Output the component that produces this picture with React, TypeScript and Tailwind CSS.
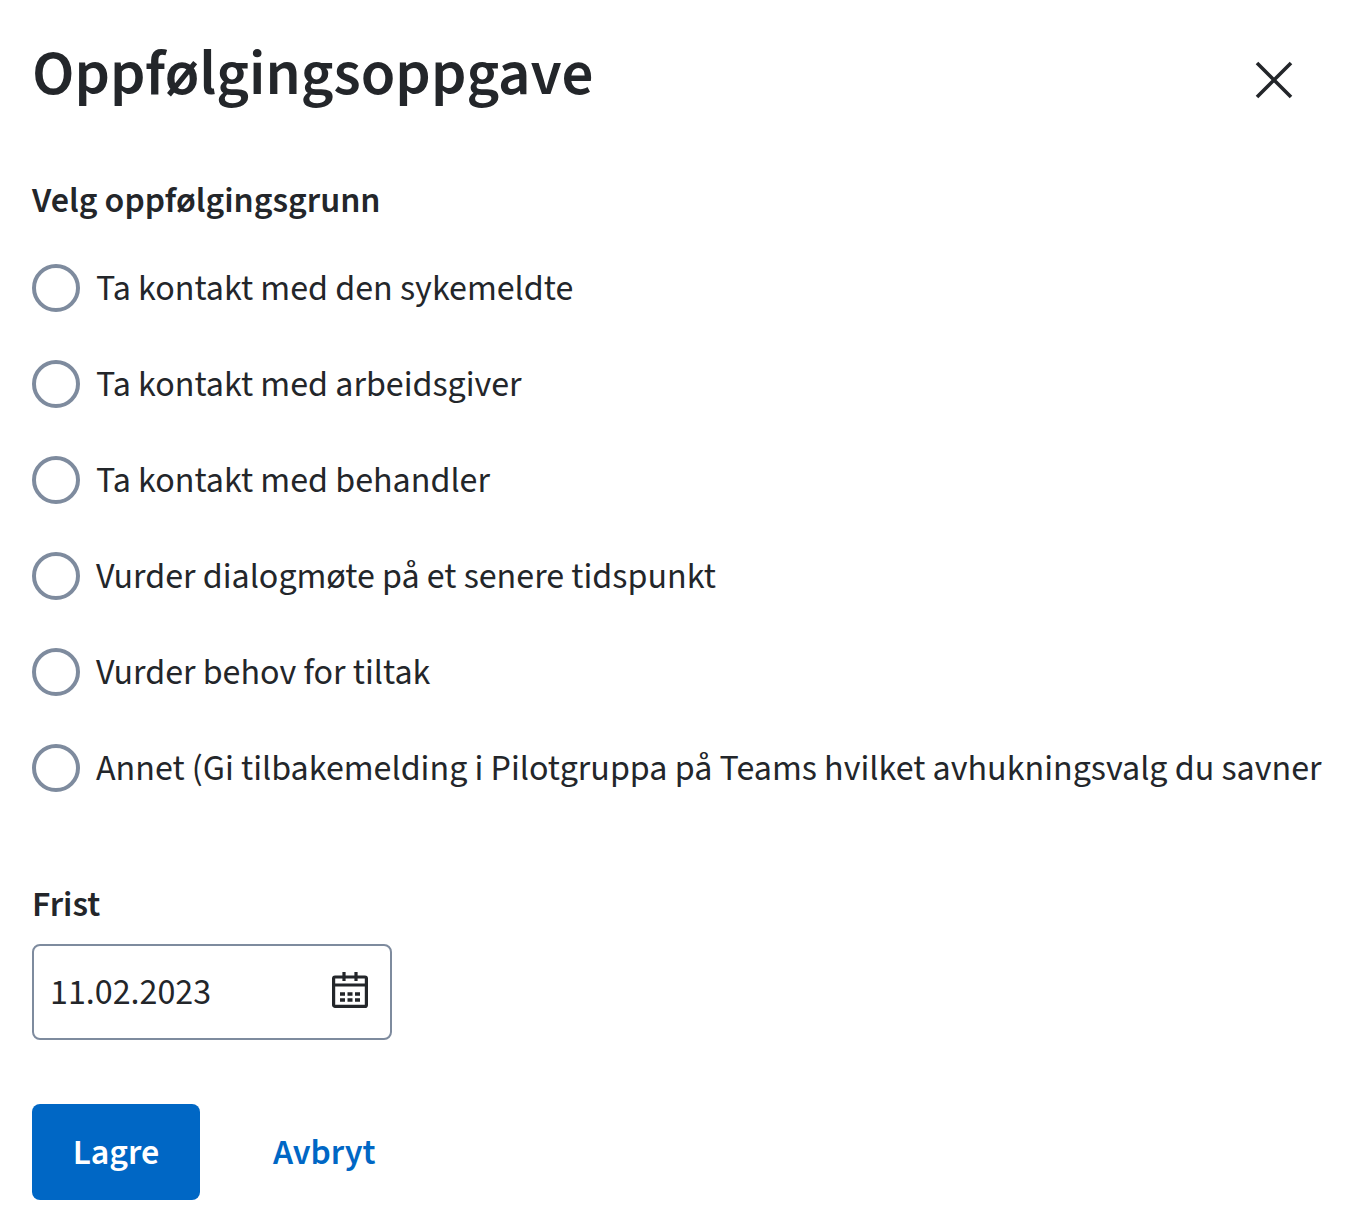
const REASONS = [
  "Ta kontakt med den sykemeldte",
  "Ta kontakt med arbeidsgiver",
  "Ta kontakt med behandler",
  "Vurder dialogmøte på et senere tidspunkt",
  "Vurder behov for tiltak",
  "Annet (Gi tilbakemelding i Pilotgruppa på Teams hvilket avhukningsvalg du savner",
];

const FONT = "font-['Source_Sans_3','Source_Sans_Pro','Noto_Sans','Open_Sans',sans-serif]";

export default function App() {
  return (
    <main className={`${FONT} h-[1232px] w-[1354px] overflow-hidden bg-white pl-8 text-[#23262a]`}>
      <div className="flex h-[148px] items-start justify-between pr-[58px] pt-6">
        <h1 className="mt-[2px] text-[63px] font-semibold leading-[96px]">Oppfølgingsoppgave</h1>
        <svg className="mt-[34px]" width="44" height="44" viewBox="0 0 44 44" fill="none" stroke="#23262a" strokeWidth="3.6">
          <path d="M5 5 39 39M39 5 5 39" />
        </svg>
      </div>

      <h2 className="mt-[29px] text-[36px] font-semibold leading-[48px]">Velg oppfølgingsgrunn</h2>

      <div className="mt-[15px] flex flex-col">
        {REASONS.map((reason) => (
          <label key={reason} className="flex h-24 items-center gap-4 whitespace-nowrap text-[36px] leading-[48px]">
            <span className="h-12 w-12 shrink-0 rounded-full border-[4px] border-[#7e8b9e] bg-white" />
            <span className="pt-[2px]">{reason}</span>
          </label>
        ))}
      </div>

      <label className="mt-[65px] block text-[36px] font-semibold leading-[48px]">Frist</label>
      <div className="mt-[15px] flex h-24 w-[360px] items-center justify-between rounded-lg border-2 border-[#7e8b9e] pl-4 pr-[22px] text-[36px]">
        <span className="pt-[2px]">11.02.2023</span>
        <svg className="-mt-1" width="36" height="36" viewBox="0 0 36 36" fill="none" stroke="#23262a" strokeWidth="3.2">
          <rect x="1.6" y="5" width="32.8" height="29.4" rx="1.5" />
          <path d="M1.6 13H34.4M12 0V9M24 0V9" />
          <path strokeWidth="3.4" d="M8 22H13M15.5 22H20.5M23 22H28M8 28H13M15.5 28H20.5M23 28H28" />
        </svg>
      </div>

      <div className="mt-16 flex items-center">
        <button className="h-24 w-[168px] rounded-lg bg-[#0067c5] pt-[2px] text-[36px] font-semibold text-white">Lagre</button>
        <button className="ml-[73px] pt-[2px] text-[36px] font-semibold text-[#0067c5]">Avbryt</button>
      </div>
    </main>
  );
}
